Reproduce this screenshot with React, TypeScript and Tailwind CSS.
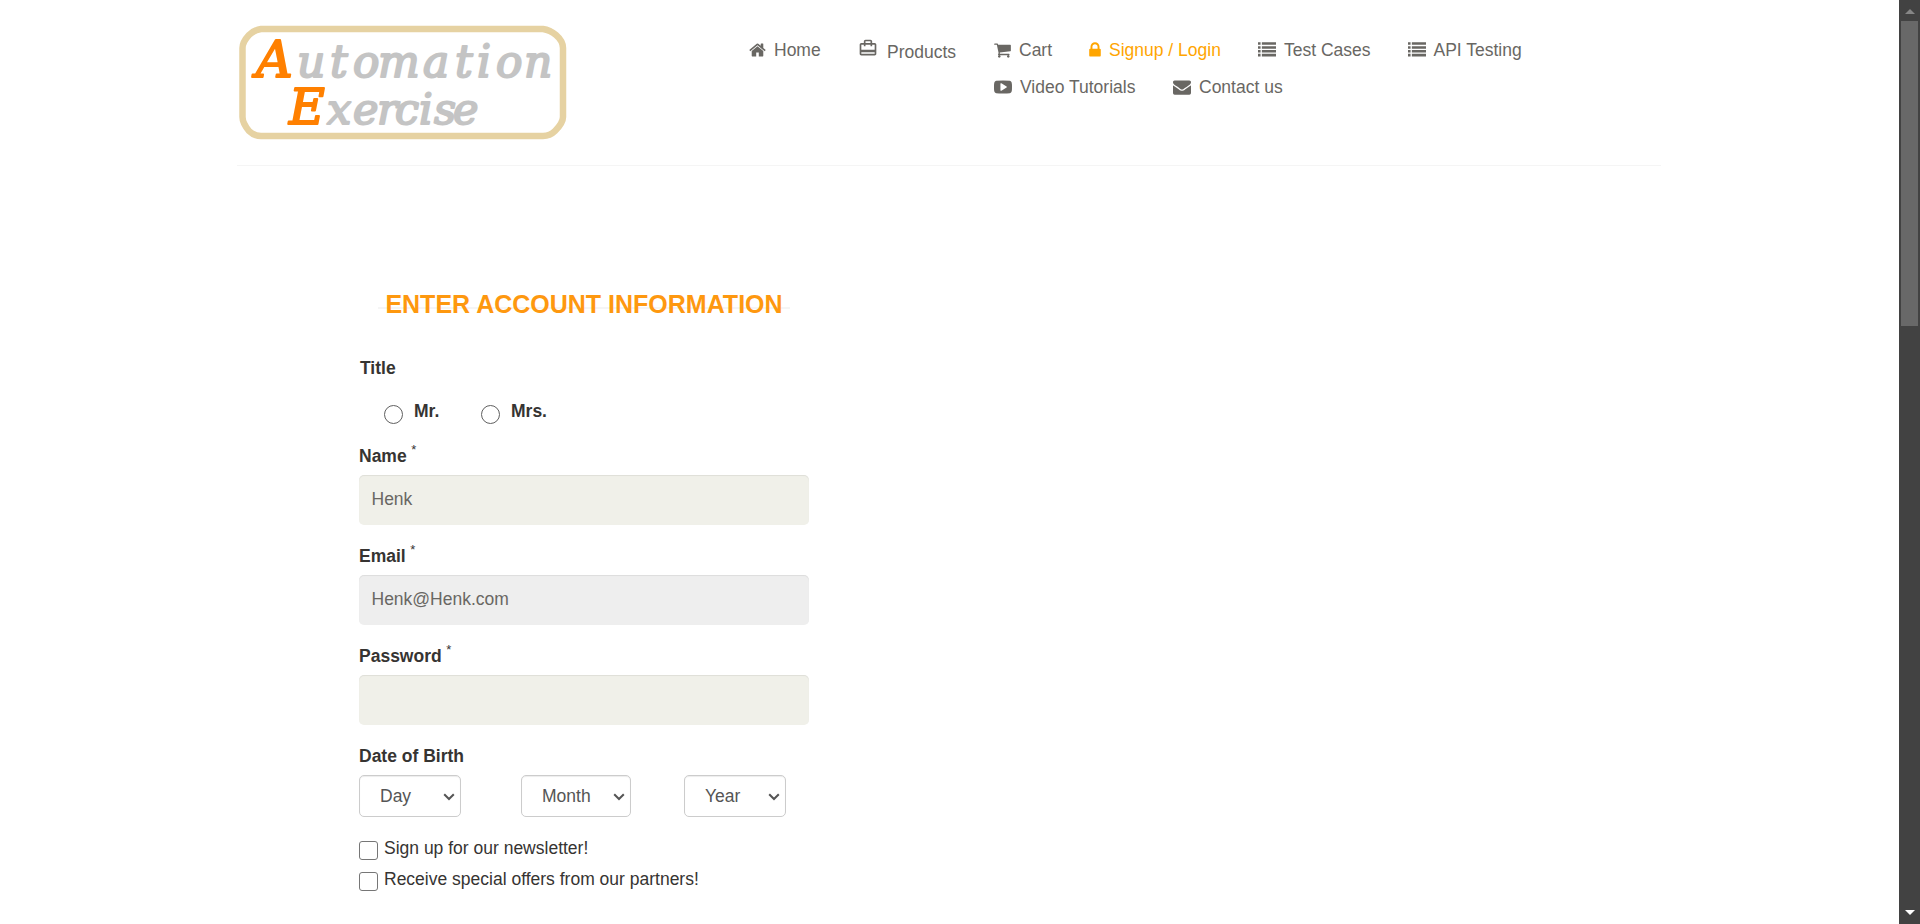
import type { ReactNode } from "react";
import { MdCardTravel } from "react-icons/md";

const PATHS = {
  home: "M1472 992v480q0 26-19 45t-45 19h-384v-384h-256v384h-384q-26 0-45-19t-19-45v-480q0-1 .5-3t.5-3l575-474 575 474q1 2 1 6zm223-69l-62 74q-8 9-21 11h-3q-13 0-21-7l-692-577-692 577q-12 8-24 7-13-2-21-11l-62-74q-8-10-7-23.5t11-21.5l719-599q32-26 76-26t76 26l244 204v-195q0-14 9-23t23-9h192q14 0 23 9t9 23v408l219 182q10 8 11 21.5t-7 23.5z",
  cart: "M704 1536q0 52-38 90t-90 38-90-38-38-90 38-90 90-38 90 38 38 90zm896 0q0 52-38 90t-90 38-90-38-38-90 38-90 90-38 90 38 38 90zm128-1088v512q0 24-16.5 42.5t-40.5 21.5l-1044 122q13 60 13 70 0 16-24 64h920q26 0 45 19t19 45-19 45-45 19h-1024q-26 0-45-19t-19-45q0-11 8-31.5t16-36 21.5-40 15.5-29.5l-177-823h-204q-26 0-45-19t-19-45 19-45 45-19h256q16 0 28.5 6.5t19.5 15.5 13 24.5 8 26 5.5 29.5 4.5 26h1201q26 0 45 19t19 45z",
  lock: "M640 768h512v-192q0-106-75-181t-181-75-181 75-75 181v192zm832 96v576q0 40-28 68t-68 28h-960q-40 0-68-28t-28-68v-576q0-40 28-68t68-28h32v-192q0-184 132-316t316-132 316 132 132 316v192h32q40 0 68 28t28 68z",
  list: "M0 1280h256v256H0zM0 896h256v256H0zM0 512h256v256H0zM0 128h256v256H0zM384 1280h1408v256H384zM384 896h1408v256H384zM384 512h1408v256H384zM384 128h1408v256H384z",
  mail: "M1792 710v794q0 66-47 113t-113 47h-1472q-66 0-113-47t-47-113v-794q44 49 101 87 362 246 497 345 57 42 92.5 65.5t94.5 48 110 24.5h2q51 0 110-24.5t94.5-48 92.5-65.5q170-123 498-345 57-39 100-87zm0-294q0 79-49 151t-122 123q-376 261-468 325-10 7-42.5 31t-54 38.5-52 32.5-57.5 27-50 9h-2q-23 0-50-9t-57.5-27-52-32.5-54-38.5-42.5-31q-91-64-262-182.5t-205-142.5q-62-42-117-115.5t-55-136.5q0-78 41.5-130t118.5-52h1472q65 0 112.5 47t47.5 113z",
  video: "M1280 896q0-37-30-54l-512-320q-31-20-65-2-33 18-33 56v640q0 38 33 56 16 8 31 8 20 0 34-10l512-320q30-17 30-54zm512 0q0 96-1 150t-8.5 136.5-22.5 147.5q-16 73-69 123t-124 58q-222 25-671 25t-671-25q-71-8-124.5-58t-69.5-123q-14-65-21.5-147.5t-8.5-136.5-1-150 1-150 8.5-136.5 22.5-147.5q16-73 69-123t124-58q222-25 671-25t671 25q71 8 124.5 58t69.5 123q14 65 21.5 147.5t8.5 136.5 1 150z",
};

function Glyph({ d, box = "0 0 1792 1792", className = "w-[18px]" }: { d: string; box?: string; className?: string }) {
  return (
    <svg viewBox={box} className={`h-[18px] shrink-0 fill-current ${className}`}>
      <path d={d} />
    </svg>
  );
}

function NavItem({ icon, label, className = "" }: { icon: ReactNode; label: string; className?: string }) {
  return (
    <a className={`flex h-5 shrink-0 items-center justify-between whitespace-nowrap ${className}`}>
      {icon}
      <span>{label}</span>
    </a>
  );
}

function Logo() {
  return (
    <svg viewBox="0 0 330 116" className="mt-[24px] ml-[2px] h-[116px] w-[330px] shrink-0">
      <path
        d="M22 5H304Q311 6 317 11Q324 17 324 24V93Q324 99 316 107Q311 112 304 112H22Q15 112 10 107Q3.5 99 3.5 93V24Q3.5 18 10 11Q15 6 22 5Z"
        fill="none"
        stroke="#e6d2a2"
        strokeWidth="6.5"
      />
      <g
        fill="#c4c4c4"
        stroke="#c4c4c4"
        strokeWidth="2"
        strokeLinejoin="round"
        className="font-['DejaVu_Serif','Liberation_Serif',serif] text-[44px] italic"
      >
        <text y="53">
          <tspan x="17" fill="#ff8000" stroke="#ff8000" className="text-[51px]">A</tspan>
          <tspan x="58 91 114 139 184 216 238 257 285">utomation</tspan>
        </text>
        <text y="100" className="text-[43px]">
          <tspan x="50" fill="#ff8000" stroke="#ff8000" className="text-[49px]">E</tspan>
          <tspan x="88 114 138 156 180 195 214">xercise</tspan>
        </text>
      </g>
    </svg>
  );
}

function Field({ label, value, disabled }: { label: string; value: string; disabled?: boolean }) {
  return (
    <div className="h-[100px]">
      <label className="flex h-[31px] items-start text-[17.5px] leading-[25px] font-bold">
        {label}
        <span className="-mt-[7px] ml-[4.5px] text-[13px] font-normal">*</span>
      </label>
      <div
        className={`flex h-[50px] items-center rounded-[5px] pb-[2px] pl-[12.5px] text-[17.5px] text-[#696763] shadow-[inset_0_1px_1px_rgba(0,0,0,0.075)] ${disabled ? "bg-[#eeeeee]" : "bg-[#f0f0e9]"}`}
      >
        {value}
      </div>
    </div>
  );
}

function Picker({ label, className }: { label: string; className: string }) {
  return (
    <div
      className={`flex h-[42px] items-center justify-between rounded-[5px] border border-[#cccccc] pr-[5px] pl-[20px] text-[17.5px] text-[#555555] shadow-[inset_0_1px_1px_rgba(0,0,0,0.075)] ${className}`}
    >
      <span>{label}</span>
      <svg viewBox="0 0 12 8" className="mt-[2px] h-2 w-3">
        <path d="M1.2 1.2L6 6L10.8 1.2" fill="none" stroke="#555555" strokeWidth="2" />
      </svg>
    </div>
  );
}

function Radio({ label, className }: { label: string; className: string }) {
  return (
    <div className={`flex ${className}`}>
      <span className="mt-[6px] mr-[11px] h-[19px] w-[19px] rounded-full border border-[#606060]" />
      <b className="text-[17.5px] leading-[25px]">{label}</b>
    </div>
  );
}

function Check({ label }: { label: string }) {
  return (
    <div className="flex h-[31px]">
      <span className="mt-[5px] mr-[6px] h-[19px] w-[19px] rounded-[3px] border border-[#767676]" />
      <span className="text-[17.5px] leading-[25px]">{label}</span>
    </div>
  );
}

export default function App() {
  return (
    <div className="flex h-[924px] overflow-hidden bg-white font-['Liberation_Sans',sans-serif] text-[#363432]">
      <main className="grow pl-[237px]">
        <header className="flex h-[166px] w-[1424px] border-b border-[#f5f5f5]">
          <Logo />
          <nav className="ml-[180px] pt-[40px] text-[17.5px] leading-5 text-[#696763]">
            <div className="flex">
              <div className="w-[110px]">
                <NavItem className="w-fit gap-[8px]" icon={<Glyph d={PATHS.home} box="64 0 1664 1792" className="w-[17px]" />} label="Home" />
              </div>
              <div className="w-[135px]">
                <a className="flex h-6 gap-[9px]">
                  <MdCardTravel className="-mt-[2px] -ml-[1px] h-5 w-5" />
                  <span className="pt-[2px]">Products</span>
                </a>
              </div>
              <div className="w-[95px]">
                <NavItem className="w-fit gap-[8px]" icon={<Glyph d={PATHS.cart} box="64 0 1664 1792" className="w-[17px]" />} label="Cart" />
              </div>
              <div className="w-[169px] text-[#ffa500]">
                <NavItem className="w-fit gap-[8px]" icon={<Glyph d={PATHS.lock} box="320 0 1152 1792" className="w-[12px]" />} label="Signup / Login" />
              </div>
              <div className="w-[149.5px]">
                <NavItem className="w-fit gap-[8px]" icon={<Glyph d={PATHS.list} />} label="Test Cases" />
              </div>
              <NavItem className="w-fit gap-[8px]" icon={<Glyph d={PATHS.list} />} label="API Testing" />
            </div>
            <div className="mt-[13px] flex pl-[245px]">
              <div className="w-[179px]">
                <NavItem className="w-fit gap-[8px]" icon={<Glyph d={PATHS.video} />} label="Video Tutorials" />
              </div>
              <NavItem className="w-fit gap-[8px]" icon={<Glyph d={PATHS.mail} />} label="Contact us" />
            </div>
          </nav>
        </header>

        <section className="ml-[122px] w-[450px] pt-[122px]">
          <h2 className="mx-auto w-[412px] bg-[linear-gradient(#f5f5f5,#f5f5f5)] bg-[length:100%_2px] bg-[position:0_19px] bg-no-repeat text-center text-[25px] leading-[33px] font-bold whitespace-nowrap text-[#fe980f]">
            ENTER ACCOUNT INFORMATION
          </h2>
          <div className="mt-[35px] h-[43px] pl-px text-[17.5px] leading-[25px] font-bold">Title</div>
          <div className="flex h-[44px] pl-[25px]">
            <Radio label="Mr." className="w-[97px]" />
            <Radio label="Mrs." className="" />
          </div>
          <div className="pt-px">
            <Field label="Name" value="Henk" />
            <Field label="Email" value="Henk@Henk.com" disabled />
            <Field label="Password" value="" />
          </div>
          <div className="h-[31px] text-[17.5px] leading-[25px] font-bold">Date of Birth</div>
          <div className="flex">
            <Picker label="Day" className="w-[102px]" />
            <Picker label="Month" className="ml-[60px] w-[110px]" />
            <Picker label="Year" className="ml-[53px] w-[102px]" />
          </div>
          <div className="pt-[19px]">
            <Check label="Sign up for our newsletter!" />
            <Check label="Receive special offers from our partners!" />
          </div>
        </section>
      </main>

      <aside className="flex w-[21px] shrink-0 flex-col items-center justify-between bg-[#424242] pt-[9px] pb-[9px]">
        <div className="flex flex-col items-center">
          <svg viewBox="0 0 10 5" className="h-[5px] w-[10px]">
            <path d="M0 5L5 0L10 5Z" fill="#868686" />
          </svg>
          <div className="mt-[7px] h-[305px] w-[17px] bg-[#686868]" />
        </div>
        <svg viewBox="0 0 10 5" className="h-[5px] w-[10px]">
          <path d="M0 0L5 5L10 0Z" fill="#ffffff" />
        </svg>
      </aside>
    </div>
  );
}
